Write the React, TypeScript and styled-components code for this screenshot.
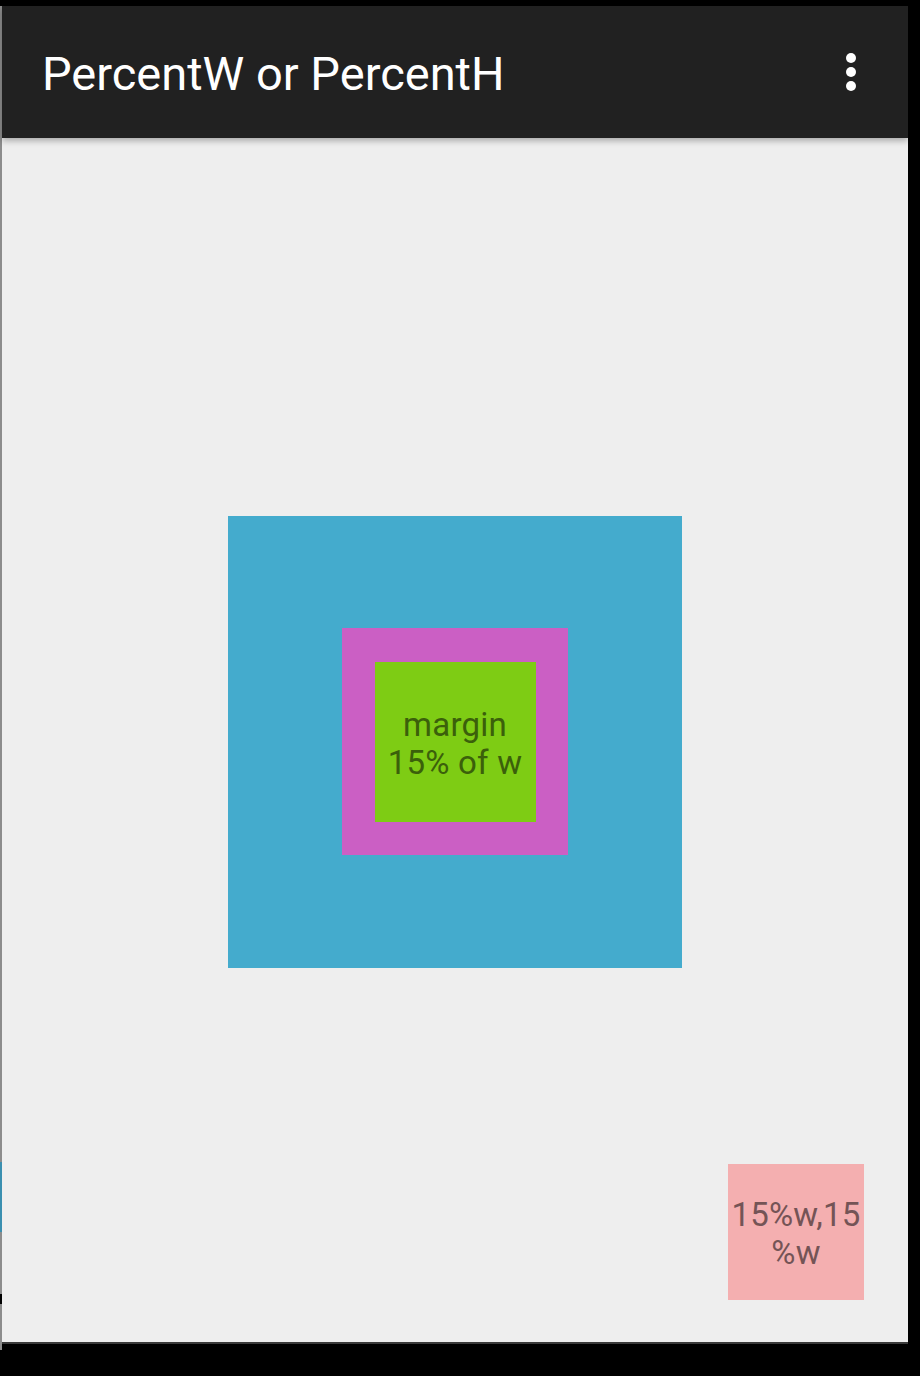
import React from "react";
import styled, { createGlobalStyle } from "styled-components";

const Global = createGlobalStyle`
  html, body { margin: 0; padding: 0; background: #000; }
  body { font-family: Roboto, "Noto Sans", Arial, sans-serif; }
  * { box-sizing: border-box; }
`;

const Page = styled.div`
  width: 920px;
  height: 1376px;
  display: flex;
  background: #000;
  overflow: hidden;
`;

const LeftEdge = styled.div`
  width: 2px;
  height: 1344px;
  margin-top: 6px;
  background: linear-gradient(
    to bottom,
    #8c8c8c 0,
    #8c8c8c 1156px,
    #3a8fb0 1156px,
    #3a8fb0 1226px,
    #8c8c8c 1226px,
    #8c8c8c 1288px,
    #000 1288px,
    #000 1298px,
    #8c8c8c 1298px
  );
`;

const Device = styled.div`
  width: 906px;
  display: flex;
  flex-direction: column;
  padding-top: 6px;
`;

const Toolbar = styled.header`
  position: relative;
  z-index: 1;
  height: 132px;
  background: #212121;
  display: flex;
  align-items: center;
  justify-content: space-between;
  padding: 0 52px 0 40px;
  box-shadow: 0 3px 6px rgba(0, 0, 0, 0.28);
`;

const Title = styled.h1`
  margin: 0;
  color: #ffffff;
  font-family: Roboto, sans-serif;
  font-weight: 400;
  font-size: 47px;
  letter-spacing: 0;
  line-height: 1;
  margin-top: 2px;
`;

const Overflow = styled.div`
  display: flex;
  flex-direction: column;
  gap: 4px;
  margin-top: -1px;
`;

const Dot = styled.span`
  width: 10px;
  height: 10px;
  border-radius: 50%;
  background: #ffffff;
`;

const Content = styled.main`
  height: 1206px;
  background: #eeeeee;
  display: grid;
  grid-template: 1fr / 1fr;
  border-bottom: 2px solid #3a3a3a;
`;

const Outer = styled.div`
  grid-area: 1 / 1;
  align-self: center;
  justify-self: center;
  width: 454px;
  height: 452px;
  margin-top: 4px;
  background: #44abcd;
  display: flex;
  align-items: center;
  justify-content: center;
`;

const Middle = styled.div`
  width: 226px;
  height: 227px;
  margin-top: -2px;
  background: #cb5fc4;
  display: flex;
  align-items: center;
  justify-content: center;
`;

const Inner = styled.div`
  width: 161px;
  height: 160px;
  margin-top: 2px;
  background: #7ecc14;
  display: flex;
  align-items: center;
  justify-content: center;
`;

const BoxLabel = styled.span<{ $tone: string }>`
  font-family: Roboto, sans-serif;
  font-size: 33px;
  line-height: 38px;
  text-align: center;
  color: ${(p) => p.$tone};
  letter-spacing: 0.2px;
  margin-top: 4px;
`;

const Corner = styled.div`
  grid-area: 1 / 1;
  align-self: end;
  justify-self: end;
  width: 136px;
  height: 136px;
  margin: 0 44px 42px 0;
  background: #f4afb0;
  display: flex;
  align-items: center;
  justify-content: center;
`;

export default function App() {
  return (
    <>
      <Global />
      <Page>
        <LeftEdge />
        <Device>
          <Toolbar>
            <Title>PercentW or PercentH</Title>
            <Overflow>
              <Dot />
              <Dot />
              <Dot />
            </Overflow>
          </Toolbar>
          <Content>
            <Outer>
              <Middle>
                <Inner>
                  <BoxLabel $tone="#3b600b">
                    margin
                    <br />
                    15% of w
                  </BoxLabel>
                </Inner>
              </Middle>
            </Outer>
            <Corner>
              <BoxLabel $tone="#745456">
                15%w,15
                <br />
                %w
              </BoxLabel>
            </Corner>
          </Content>
        </Device>
      </Page>
    </>
  );
}
